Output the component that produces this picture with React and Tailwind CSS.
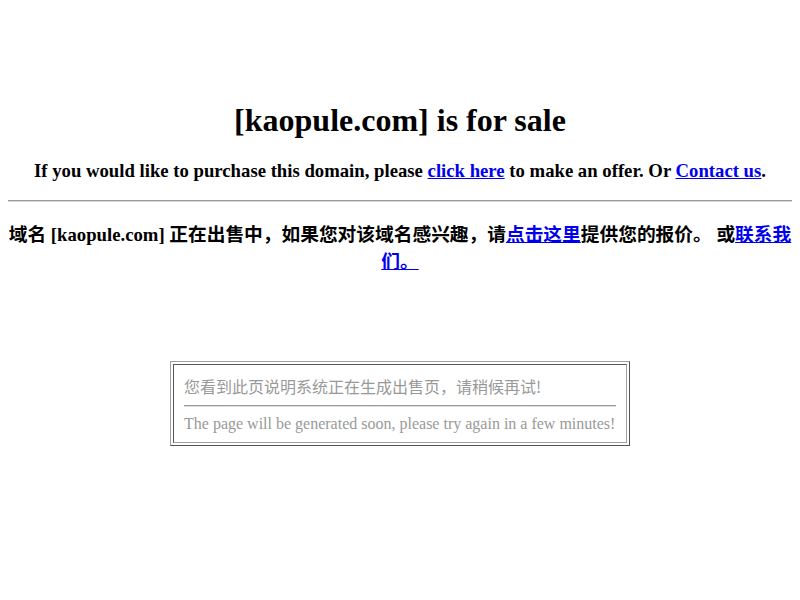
export default function App() {
  const serif = "font-['Liberation_Serif','Noto_Sans_CJK_SC',serif]";
  return (
    <div className={`min-h-[600px] bg-white px-2 text-black ${serif}`}>
      <h1 className="pt-[102px] text-center text-[32px] font-bold leading-[37px]">
        [kaopule.com] is for sale
      </h1>
      <p className="mt-[21px] text-center text-[18.72px] font-bold leading-[22px]">
        If you would like to purchase this domain, please{" "}
        <a href="#" className="text-[#0000ee] underline">click here</a> to make an offer. Or{" "}
        <a href="#" className="text-[#0000ee] underline">Contact us</a>.
      </p>
      <div className="mt-[18px] h-[2px] border-t border-b border-t-[#9a9a9a] border-b-[#d8d8d8]" />
      <p className="mt-[19px] text-center text-[18.72px] font-bold leading-[27px]">
        域名 [kaopule.com] 正在出售中，如果您对该域名感兴趣，请
        <a href="#" className="text-[#0000ee] underline">点击这里</a>提供您的报价。 或
        <a href="#" className="text-[#0000ee] underline">联系我们。</a>
      </p>
      <div className="mt-[86px] flex justify-center">
        <div className="w-[460px] border border-t-[#a0a0a0] border-l-[#a0a0a0] border-r-[#555] border-b-[#555] p-[2px]">
          <div className="border border-t-[#555] border-l-[#555] border-r-[#a0a0a0] border-b-[#a0a0a0] px-[10px] pt-[10px] pb-[9px] text-[16px] text-[#999]">
            <div className="font-['Noto_Sans_CJK_SC',sans-serif] leading-[23px]">
              您看到此页说明系统正在生成出售页，请稍候再试!
            </div>
            <div className="mt-[7px] h-[2px] border-t border-b border-t-[#999] border-b-[#e0e0e0]" />
            <div className="mt-[8px] leading-[18px]">
              The page will be generated soon, please try again in a few minutes!
            </div>
          </div>
        </div>
      </div>
    </div>
  );
}
